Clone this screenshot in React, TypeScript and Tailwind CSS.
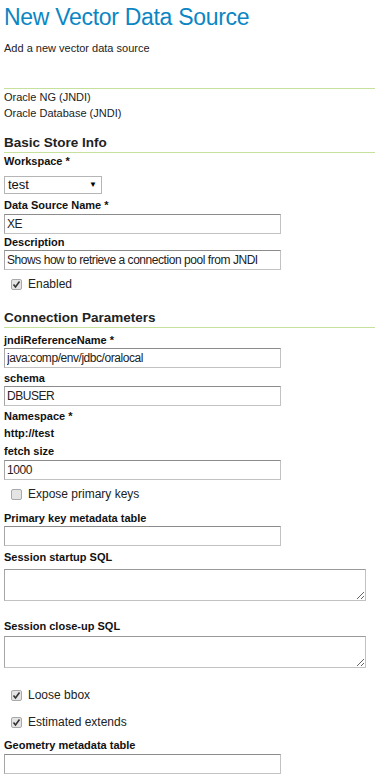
import React from 'react';

const font = { fontFamily: '"Liberation Sans", Arial, sans-serif' };

function Label({ children, className = '' }: { children: React.ReactNode; className?: string }) {
  return <div className={`text-[11px] leading-[14px] font-bold text-[#111] ${className}`}>{children}</div>;
}

function TextInput({ value = '', className = '' }: { value?: string; className?: string }) {
  return (
    <input
      type="text"
      defaultValue={value}
      className={`block w-[277px] h-[20px] px-[2px] text-[12px] tracking-[-0.45px] text-[#222] bg-white border border-[#c2c2c2] border-t-[#8c8c8c] border-l-[#a6a6a6] outline-none ${className}`}
      style={font}
    />
  );
}

function Area({ className = '' }: { className?: string }) {
  return (
    <textarea
      className={`block w-[362px] h-[32px] px-[2px] text-[12px] bg-white border border-[#c2c2c2] border-t-[#9a9a9a] border-l-[#a6a6a6] outline-none ${className}`}
      style={font}
    />
  );
}

function Check({ label, checked, className = '' }: { label: string; checked?: boolean; className?: string }) {
  return (
    <div className={`flex items-center h-[16px] pl-[7px] text-[12px] text-[#222] ${className}`}>
      <span className="flex items-center justify-center w-[11px] h-[11px] rounded-[2px] border border-[#a9a9a9] bg-[#e4e4e4]">
        {checked && (
          <svg width="9" height="9" viewBox="0 0 9 9">
            <path d="M1.5 4.5 L3.5 7 L7.5 1.5" fill="none" stroke="#333" strokeWidth="1.6" />
          </svg>
        )}
      </span>
      <span className="ml-[6px]">{label}</span>
    </div>
  );
}

function Heading({ children, className = '' }: { children: React.ReactNode; className?: string }) {
  return (
    <div className={className}>
      <div className="text-[13.5px] leading-[18px] font-bold text-[#222]">{children}</div>
      <div className="h-px bg-[#c6e19c] -mr-[4px]" />
    </div>
  );
}

export default function App() {
  return (
    <div className="w-[375px] h-[780px] overflow-hidden bg-white pl-[4px] text-[#222]" style={font}>
      <h1 className="mt-[3px] text-[23px] leading-[28px] tracking-[-0.3px] text-[#0b86c3]">New Vector Data Source</h1>
      <p className="mt-[9px] text-[11px] leading-[16px]">Add a new vector data source</p>

      <div className="mt-[32px] h-px bg-[#c6e19c] -mr-[4px]" />
      <div className="text-[11px] leading-[16px]">Oracle NG (JNDI)</div>
      <div className="text-[11px] leading-[16px]">Oracle Database (JNDI)</div>

      <Heading className="mt-[13px]">Basic Store Info</Heading>
      <Label className="leading-[16px]">Workspace *</Label>
      <div className="mt-[7px] flex items-center justify-between w-[98px] h-[18px] pl-[3px] pr-[4px] border border-[#b5b5b5] bg-white text-[13px] text-[#111]">
        <span>test</span>
        <span className="text-[8px] text-black">▼</span>
      </div>

      <Label className="mt-[4px]">Data Source Name *</Label>
      <TextInput value="XE" className="mt-[2px]" />
      <Label className="mt-[1px]">Description</Label>
      <TextInput value="Shows how to retrieve a connection pool from JNDI" className="mt-[1px]" />
      <Check label="Enabled" checked className="mt-[6px]" />

      <Heading className="mt-[17px]">Connection Parameters</Heading>
      <Label className="mt-[5px]">jndiReferenceName *</Label>
      <TextInput value="java:comp/env/jdbc/oralocal" className="mt-[1px]" />
      <Label className="mt-[3px]">schema</Label>
      <TextInput value="DBUSER" className="mt-[1px]" />
      <Label className="mt-[3px]">Namespace *</Label>
      <Label className="mt-[3px]">http://test</Label>
      <Label className="mt-[4px]">fetch size</Label>
      <TextInput value="1000" className="mt-[2px]" />
      <Check label="Expose primary keys" className="mt-[6px]" />

      <Label className="mt-[9px]">Primary key metadata table</Label>
      <TextInput className="mt-[1px]" />
      <Label className="mt-[4px]">Session startup SQL</Label>
      <Area className="mt-[5px]" />
      <Label className="mt-[18px]">Session close-up SQL</Label>
      <Area className="mt-[3px]" />

      <Check label="Loose bbox" checked className="mt-[19px]" />
      <Check label="Estimated extends" checked className="mt-[11px]" />
      <Label className="mt-[8px]">Geometry metadata table</Label>
      <TextInput className="mt-[2px]" />
    </div>
  );
}
